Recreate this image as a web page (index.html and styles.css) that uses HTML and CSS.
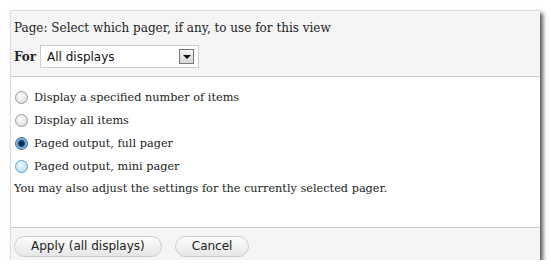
FILE: index.html
```html
<!DOCTYPE html>
<html lang="en">
<head>
    <meta charset="UTF-8">
    <title>Pager settings</title>
    <link rel="stylesheet" href="styles.css">
</head>
<body>
    <div class="dialog">
        <div class="dialog-head">
            <div class="title">Page: Select which pager, if any, to use for this view</div>
            <div class="for-row">
                <label class="for-label">For</label>
                <div class="select">
                    <span>All displays</span>
                    <span class="select-btn"><span class="arrow"></span></span>
                </div>
            </div>
        </div>

        <div class="dialog-body">
            <label class="option"><span class="radio"></span>Display a specified number of items</label>
            <label class="option"><span class="radio"></span>Display all items</label>
            <label class="option"><span class="radio checked"></span>Paged output, full pager</label>
            <label class="option"><span class="radio hover"></span>Paged output, mini pager</label>
            <p class="note">You may also adjust the settings for the currently selected pager.</p>
        </div>

        <div class="dialog-foot">
            <button class="btn">Apply (all displays)</button>
            <button class="btn">Cancel</button>
        </div>
    </div>
</body>
</html>
```

FILE: styles.css
```css
body {
    margin: 0;
    padding: 10px 0 0 10px;
    background: #fff;
    font-family: "DejaVu Serif", Georgia, serif;
    font-size: 12px;
    color: #222;
}
.dialog {
    width: 529px;
    height: 249px;
    border: 1px solid #ddd;
    border-right: 0;
    border-bottom: 0;
    display: flex;
    flex-direction: column;
    box-shadow: 3px 3px 4px rgba(0,0,0,0.65);
}
.dialog-head {
    background: #f5f5f5;
    height: 65px;
    padding: 0 3px;
    border-bottom: 1px solid #ccc;
}
.title {
    margin-top: 9px;
    line-height: 16px;
}
.for-row {
    display: flex;
    align-items: center;
    margin-top: 9px;
}
.for-label {
    font-weight: bold;
    width: 26px;
}
.select {
    width: 159px;
    height: 23px;
    background: #fff;
    border: 1px solid #ccc;
    display: flex;
    align-items: center;
    justify-content: space-between;
    font-family: "DejaVu Sans", Verdana, sans-serif;
    font-size: 12px;
    padding-left: 6px;
    box-sizing: border-box;
    color: #111;
}
.select-btn {
    width: 13px;
    height: 13px;
    border: 1px solid #777;
    background: linear-gradient(#f4f4f4, #d8d8d8);
    margin-right: 4px;
    display: flex;
    align-items: center;
    justify-content: center;
}
.arrow {
    width: 0;
    height: 0;
    border-left: 4px solid transparent;
    border-right: 4px solid transparent;
    border-top: 4px solid #111;
    margin-top: 1px;
}
.dialog-body {
    background: #fff;
    flex: 1;
    padding: 9px 3px 0;
    font-size: 11.3px;
}
.option {
    display: flex;
    align-items: center;
    height: 23px;
}
.radio {
    width: 11px;
    height: 11px;
    border-radius: 50%;
    border: 1px solid #999;
    background: radial-gradient(circle at 40% 35%, #fff, #d4d4d4);
    margin: 0 6px 0 1px;
    box-sizing: content-box;
}
.radio.checked {
    border-color: #33658a;
    background: radial-gradient(circle, #0c2c4a 0 2.5px, #3f88c0 3.5px, #bcdcf2 6px);
}
.radio.hover {
    border-color: #5aa0d4;
    background: radial-gradient(circle at 40% 35%, #f2faff, #a9d4f2);
}
.note {
    margin: 3px 0 0;
    line-height: 16px;
}
.dialog-foot {
    background: #f5f5f5;
    height: 32px;
    border-top: 1px solid #ccc;
    display: flex;
    align-items: center;
    gap: 13px;
    padding: 0 3px;
}
.btn {
    font-family: "DejaVu Sans", Verdana, sans-serif;
    font-size: 12px;
    color: #222;
    height: 21px;
    padding: 0 16px;
    border: 1px solid #ccc;
    border-radius: 11px;
    background: linear-gradient(#fcfcfc, #e6e6e6);
    margin-top: 4px;
}
```
